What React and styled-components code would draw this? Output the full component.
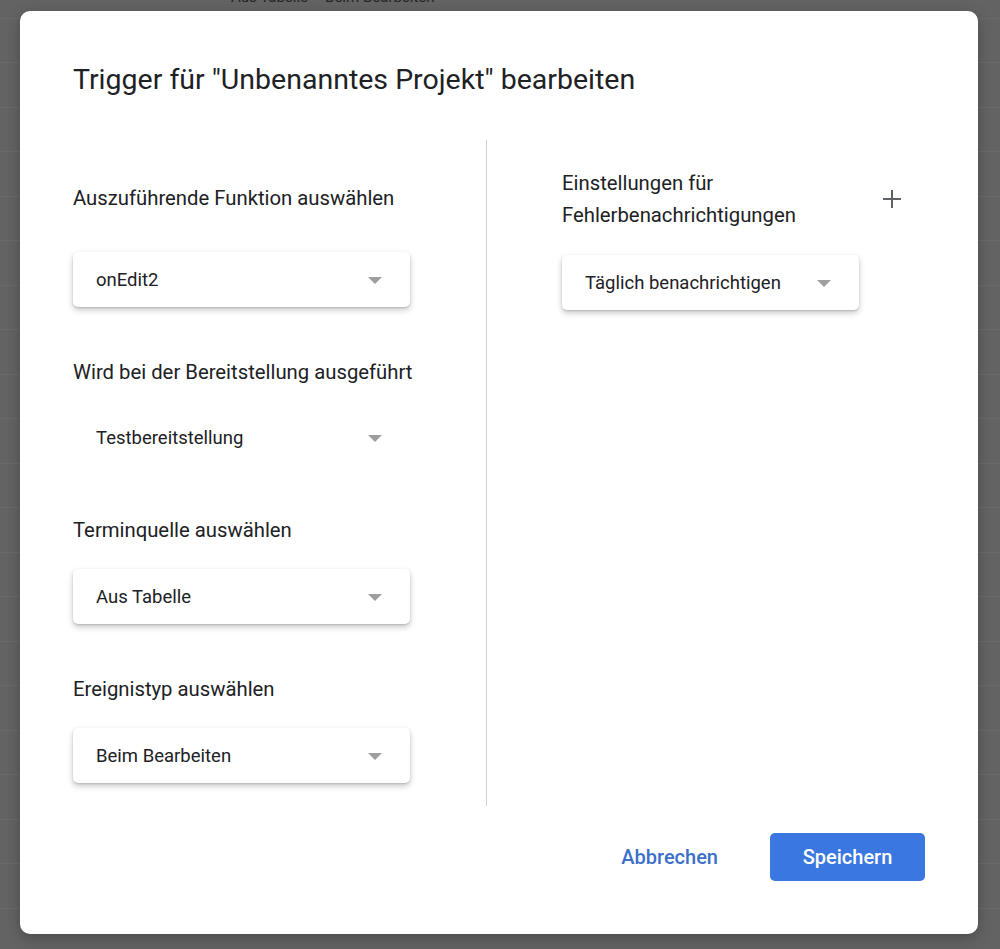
import React from 'react';
import styled, { createGlobalStyle } from 'styled-components';

const GlobalStyle = createGlobalStyle`
  html, body { margin: 0; padding: 0; }
  body {
    background: #636363;
    font-family: Roboto, "Liberation Sans", Arial, sans-serif;
    -webkit-font-smoothing: antialiased;
  }
`;

const Page = styled.div`
  position: relative;
  width: 1000px;
  height: 949px;
  overflow: hidden;
  background: #636363;
`;

const Sheet = styled.div`
  display: flex;
  flex-direction: column;
`;

const SheetRow = styled.div`
  flex-shrink: 0;
  height: ${p => p.$h}px;
  box-sizing: border-box;
  border-bottom: 1px solid #6a6a6a;
  display: flex;
  align-items: flex-start;
  overflow: hidden;
`;

const SheetCell = styled.span`
  display: block;
  margin-top: -11px;
  margin-left: ${p => p.$ml}px;
  font-size: 15px;
  line-height: 16px;
  color: #262626;
  white-space: nowrap;
`;

const Dialog = styled.div`
  position: absolute;
  left: 20px;
  top: 11px;
  width: 958px;
  height: 923px;
  box-sizing: border-box;
  background: #fff;
  border-radius: 10px;
  box-shadow: 0 4px 14px rgba(0, 0, 0, 0.25);
  padding: 53px 53px 53px 53px;
  display: flex;
  flex-direction: column;
`;

const Title = styled.h1`
  margin: 0 0 44px 0;
  font-size: 28.5px;
  line-height: 32px;
  font-weight: 400;
  color: #202124;
  letter-spacing: 0;
`;

const Body = styled.div`
  display: grid;
  grid-template-columns: 413px 1px 1fr;
  height: 666px;
`;

const LeftColumn = styled.div`
  display: flex;
  flex-direction: column;
  gap: 53px;
  padding-top: 46px;
`;

const Divider = styled.div`
  background: #cfcfcf;
`;

const RightColumn = styled.div`
  display: flex;
  flex-direction: column;
  gap: 24px;
  padding-top: 27px;
  padding-left: 75px;
`;

const Field = styled.div`
  display: flex;
  flex-direction: column;
  gap: ${p => p.$gap}px;
`;

const Label = styled.div`
  font-size: 20.3px;
  line-height: 24px;
  color: #202124;
`;

const Select = styled.div`
  box-sizing: border-box;
  width: ${p => p.$w}px;
  height: 55px;
  display: flex;
  align-items: center;
  justify-content: space-between;
  padding: 0 28px 0 23px;
  border-radius: 5px;
  background: #fff;
  box-shadow: ${p => (p.$plain ? 'none' : '0 3px 6px rgba(0,0,0,0.22), 0 1px 2px rgba(0,0,0,0.14)')};
  font-size: 18.5px;
  color: #202124;
`;

const Arrow = styled.span`
  width: 0;
  height: 0;
  border-left: 7px solid transparent;
  border-right: 7px solid transparent;
  border-top: 7px solid #9e9e9e;
  margin-top: 2px;
`;

const NotifyHeader = styled.div`
  width: 340px;
  display: flex;
  align-items: center;
  justify-content: space-between;
`;

const NotifyTitle = styled.div`
  width: 270px;
  font-size: 20.3px;
  line-height: 32px;
  color: #202124;
`;

const IconButton = styled.span`
  display: flex;
  width: 20px;
  height: 20px;
  color: #5f6368;
`;

const Footer = styled.div`
  margin-top: 27px;
  display: flex;
  justify-content: flex-end;
  align-items: center;
  gap: 28px;
`;

const Button = styled.button`
  height: 48px;
  box-sizing: border-box;
  border: none;
  border-radius: 5px;
  font-family: Roboto, "Liberation Sans", Arial, sans-serif;
  font-size: 20px;
  font-weight: 500;
  cursor: pointer;
  padding: 0 24px;
  background: ${p => (p.$primary ? '#3a77e0' : 'transparent')};
  color: ${p => (p.$primary ? '#fff' : '#3b6fc8')};
  width: ${p => (p.$primary ? '155px' : 'auto')};
`;

const PlusIcon = () => (
  <svg width="20" height="20" viewBox="0 0 20 20" fill="none">
    <path d="M10 1v18M1 10h18" stroke="currentColor" strokeWidth="2" />
  </svg>
);

const fields = [
  { label: 'Auszuführende Funktion auswählen', value: 'onEdit2', gap: 42 },
  { label: 'Wird bei der Bereitstellung ausgeführt', value: 'Testbereitstellung', gap: 26, plain: true },
  { label: 'Terminquelle auswählen', value: 'Aus Tabelle', gap: 27 },
  { label: 'Ereignistyp auswählen', value: 'Beim Bearbeiten', gap: 27 },
];

export default function App() {
  return (
    <>
      <GlobalStyle />
      <Page>
        <Sheet>
          <SheetRow $h={19}>
            <SheetCell $ml={231}>Aus Tabelle</SheetCell>
            <SheetCell $ml={17}>Beim Bearbeiten</SheetCell>
          </SheetRow>
          {[44, 45, 44, 45, 44, 45, 44, 45, 44, 45, 44, 45, 44, 45, 44, 45, 44, 45, 44, 45, 44].map((h, i) => (
            <SheetRow key={i} $h={h} />
          ))}
        </Sheet>
        <Dialog>
          <Title>Trigger für "Unbenanntes Projekt" bearbeiten</Title>
          <Body>
            <LeftColumn>
              {fields.map(f => (
                <Field key={f.label} $gap={f.gap}>
                  <Label>{f.label}</Label>
                  <Select $w={337} $plain={f.plain}>
                    <span>{f.value}</span>
                    <Arrow />
                  </Select>
                </Field>
              ))}
            </LeftColumn>
            <Divider />
            <RightColumn>
              <NotifyHeader>
                <NotifyTitle>Einstellungen für Fehlerbenachrichtigungen</NotifyTitle>
                <IconButton>
                  <PlusIcon />
                </IconButton>
              </NotifyHeader>
              <Select $w={297}>
                <span>Täglich benachrichtigen</span>
                <Arrow />
              </Select>
            </RightColumn>
          </Body>
          <Footer>
            <Button>Abbrechen</Button>
            <Button $primary>Speichern</Button>
          </Footer>
        </Dialog>
      </Page>
    </>
  );
}
